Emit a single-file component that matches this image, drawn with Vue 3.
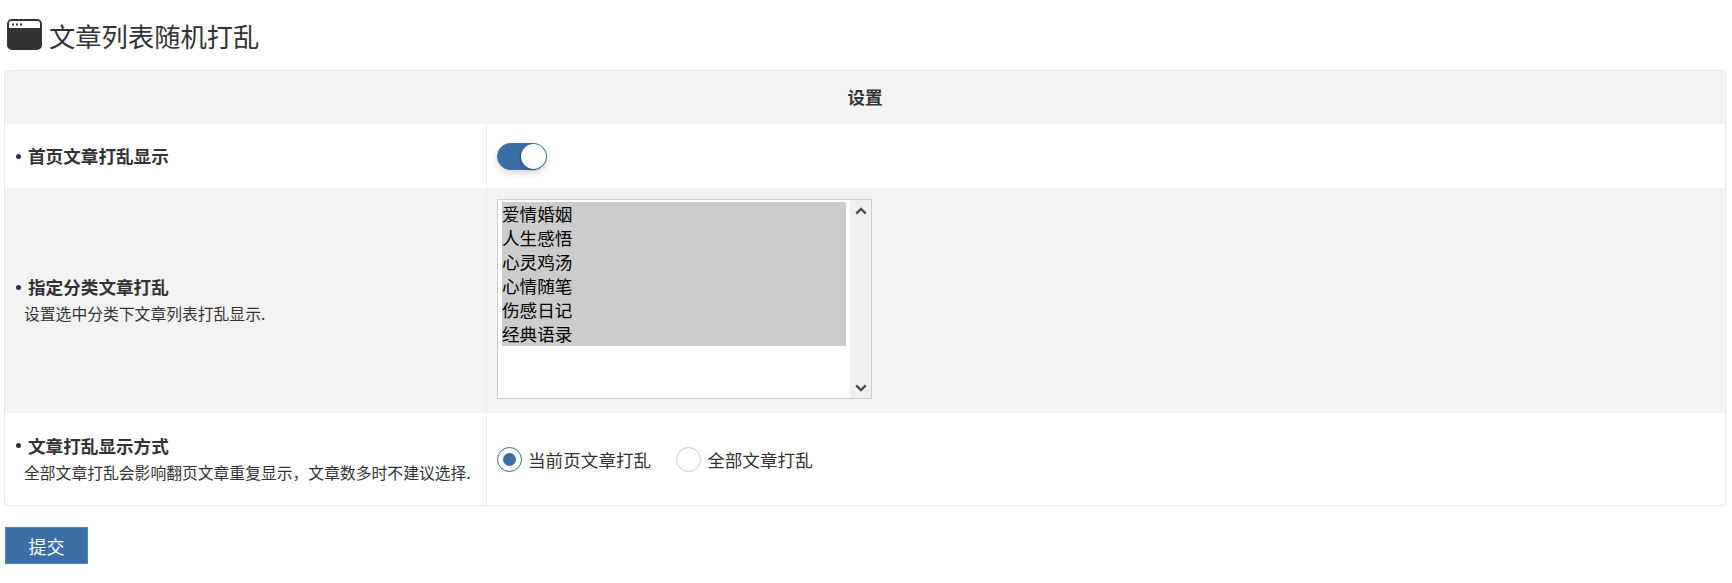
<script setup>
import { ref } from 'vue'

const shuffleHome = ref(true)
const mode = ref('page')
const categories = ['爱情婚姻', '人生感悟', '心灵鸡汤', '心情随笔', '伤感日记', '经典语录']
</script>

<template>
  <div class="page">
    <h2 class="title">
      <svg class="title-icon" viewBox="0 0 35 31" aria-hidden="true">
        <path fill-rule="evenodd" fill="#333" d="M5 0h25a5 5 0 0 1 5 5v21a5 5 0 0 1-5 5H5a5 5 0 0 1-5-5V5a5 5 0 0 1 5-5zM2 9h31V5a3 3 0 0 0-3-3H5a3 3 0 0 0-3 3z" />
        <path fill="#fff" d="M2 9h31V5a3 3 0 0 0-3-3H5a3 3 0 0 0-3 3z" />
        <rect x="5" y="4.5" width="2" height="2" fill="#333" />
        <rect x="9" y="4.5" width="2" height="2" fill="#333" />
        <rect x="13" y="4.5" width="2" height="2" fill="#333" />
      </svg>
      <span class="title-text">文章列表随机打乱</span>
    </h2>

    <div class="card">
      <div class="card-head">设置</div>

      <div class="row row-switch">
        <div class="cell-label">
          <div class="label"><i class="dot"></i>首页文章打乱显示</div>
        </div>
        <div class="cell-field">
          <button class="switch" :class="{ on: shuffleHome }" @click="shuffleHome = !shuffleHome">
            <span class="knob"></span>
          </button>
        </div>
      </div>

      <div class="row row-select alt">
        <div class="cell-label has-desc">
          <div class="label"><i class="dot"></i>指定分类文章打乱</div>
          <div class="desc">设置选中分类下文章列表打乱显示.</div>
        </div>
        <div class="cell-field">
          <div class="listbox">
            <div class="options">
              <div v-for="c in categories" :key="c" class="option">{{ c }}</div>
            </div>
            <div class="scrollbar">
              <svg viewBox="0 0 12 8" class="arrow"><path d="M1.2 6.6 6 2l4.8 4.6" /></svg>
              <svg viewBox="0 0 12 8" class="arrow"><path d="M1.2 1.4 6 6l4.8-4.6" /></svg>
            </div>
          </div>
        </div>
      </div>

      <div class="row row-radio">
        <div class="cell-label has-desc">
          <div class="label"><i class="dot"></i>文章打乱显示方式</div>
          <div class="desc">全部文章打乱会影响翻页文章重复显示，文章数多时不建议选择.</div>
        </div>
        <div class="cell-field radios">
          <label class="radio" :class="{ checked: mode === 'page' }" @click="mode = 'page'">
            <span class="ring"></span>当前页文章打乱
          </label>
          <label class="radio" :class="{ checked: mode === 'all' }" @click="mode = 'all'">
            <span class="ring"></span>全部文章打乱
          </label>
        </div>
      </div>
    </div>

    <button class="submit">提交</button>
  </div>
</template>

<style>
body {
  background: #fff;
}
</style>

<style scoped>
.page {
  height: 583px;
  box-sizing: border-box;
  padding: 19px 7px 0 5px;
  overflow: hidden;
  font-family: "Noto Sans CJK SC", "Noto Sans", sans-serif;
  color: #333;
}

.title {
  display: flex;
  align-items: center;
  gap: 7px;
  height: 31px;
  margin: 0 0 21px 2px;
  font-size: 26.3px;
  font-weight: 400;
  line-height: 31px;
}

.title-text {
  padding-top: 2px;
}

.title-icon {
  width: 35px;
  height: 31px;
  flex: none;
}

.card {
  border-radius: 3px;
  box-shadow: 0 0 2px rgba(0, 0, 0, 0.3);
}

.card-head {
  height: 53px;
  line-height: 51px;
  text-align: center;
  background: #f3f3f3;
  font-size: 17.6px;
  font-weight: 700;
}

.row {
  display: flex;
}

.row.alt {
  background: #f3f3f3;
}

.row-switch {
  height: 64px;
}

.row-select {
  height: 225px;
}

.row-radio {
  height: 92px;
}

.cell-label {
  width: 482px;
  flex: none;
  box-sizing: border-box;
  display: flex;
  flex-direction: column;
  justify-content: center;
  padding-left: 11px;
  border-right: 1px solid #eee;
}

.cell-label.has-desc {
  padding-bottom: 2px;
}

.cell-field {
  padding: 11px 10px;
  flex: 1;
}

.label {
  display: flex;
  align-items: center;
  font-size: 17.6px;
  font-weight: 700;
  line-height: 26px;
}

.dot {
  width: 5px;
  height: 5px;
  margin-right: 7px;
  border-radius: 50%;
  background: #333;
}

.desc {
  margin: 3px 0 0 8px;
  font-size: 15.8px;
  line-height: 22px;
}

.switch {
  display: block;
  position: relative;
  width: 50px;
  height: 27px;
  margin-top: 8px;
  padding: 0;
  border: 1px solid #3a6ea5;
  border-radius: 14px;
  background: #3a6ea5;
  box-shadow: 0 3px 6px rgba(0, 0, 0, 0.15);
  cursor: pointer;
}

.knob {
  position: absolute;
  top: 0;
  right: 0;
  width: 25px;
  height: 25px;
  border-radius: 50%;
  background: #fff;
  box-shadow: -1px 1px 3px rgba(0, 0, 0, 0.3);
}

.listbox {
  display: flex;
  width: 375px;
  height: 200px;
  box-sizing: border-box;
  border: 1px solid #ccc;
  background: #fff;
}

.options {
  flex: 1;
  padding: 2px 4px 0;
  font-size: 17.6px;
  line-height: 24px;
  color: #000;
}

.option {
  background: #ccc;
}

.scrollbar {
  width: 21px;
  display: flex;
  flex-direction: column;
  justify-content: space-between;
  align-items: center;
  padding: 7px 0 6px;
  background: #f0f0f0;
}

.arrow {
  width: 12px;
  height: 8px;
  fill: none;
  stroke: #505050;
  stroke-width: 2.4;
}

.radios {
  display: flex;
  align-items: center;
  gap: 25px;
}

.radio {
  display: flex;
  align-items: center;
  gap: 6px;
  font-size: 17.6px;
  cursor: pointer;
}

.ring {
  position: relative;
  width: 25px;
  height: 25px;
  box-sizing: border-box;
  border: 1px solid #ccc;
  border-radius: 50%;
}

.radio.checked .ring {
  border-color: #3a6ea5;
}

.radio.checked .ring::after {
  content: "";
  position: absolute;
  inset: 5px;
  border-radius: 50%;
  background: #3a6ea5;
}

.submit {
  display: block;
  width: 83px;
  height: 37px;
  margin: 22px 0 0;
  padding: 0;
  border: 1px solid #3a8cc4;
  background: #3a6ea5;
  color: #fff;
  font-family: inherit;
  font-size: 18px;
  cursor: pointer;
}
</style>
